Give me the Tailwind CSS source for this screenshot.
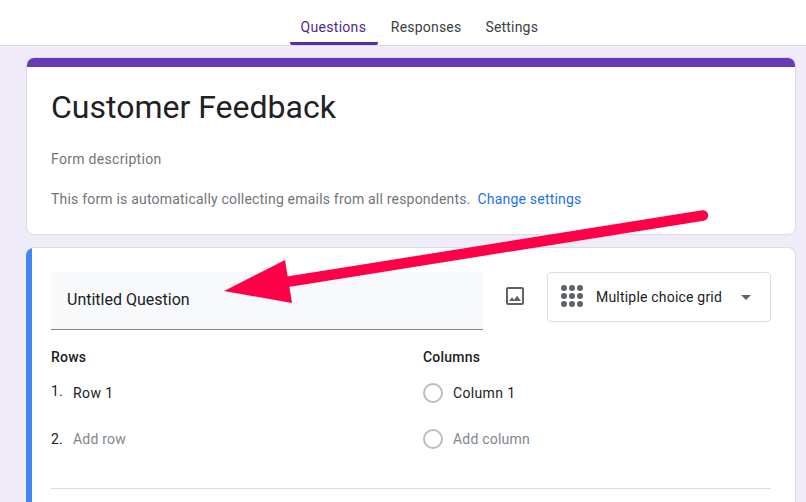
<!DOCTYPE html>
<html lang="en">
<head>
  <meta charset="UTF-8" />
  <title>Customer Feedback</title>
  <script src="https://cdn.jsdelivr.net/npm/@tailwindcss/browser@4"></script>
</head>
<body class="relative w-[806px] h-[502px] overflow-hidden bg-[#f0ebf8] font-['Roboto',sans-serif] text-[#202124]">

  <!-- tabs -->
  <div class="h-[46px] bg-white border-b border-[#dadce0] flex justify-center pl-[22px]">
    <div class="flex text-[14px] font-[450] text-[#3c4043] tracking-[0.2px]">
      <div class="w-[88px] h-[45px] pt-[18px] pr-[1px] leading-[18px] text-center text-[#4a2a8e] tracking-[0.3px] border-b-[3px] border-[#512da8] rounded-b-[2px]">Questions</div>
      <div class="ml-[13px] pt-[18px] leading-[18px]">Responses</div>
      <div class="ml-[24px] pt-[18px] leading-[18px]">Settings</div>
    </div>
  </div>

  <!-- title card -->
  <div class="ml-[26px] mt-[11px] w-[770px] h-[178px] bg-white border border-[#dadce0] rounded-[8px] overflow-hidden">
    <div class="h-[10px] -mx-px -mt-px bg-[#673ab7]"></div>
    <div class="pl-[24px] pt-[20px]">
      <div class="text-[32px] leading-[40px]">Customer Feedback</div>
      <div class="mt-[22px] text-[14px] leading-[20px] tracking-[0.3px] text-[#70757a]">Form description</div>
      <div class="mt-[20px] text-[14px] leading-[20px] tracking-[0.2px] text-[#70757a]">This form is automatically collecting emails from all respondents.<span class="ml-[7px] text-[#1a73e8]">Change settings</span></div>
    </div>
  </div>

  <!-- question card -->
  <div class="ml-[26px] mt-[12px] w-[770px] h-[255px] bg-white border border-[#dadce0] border-l-0 border-b-0 rounded-t-[8px] overflow-hidden relative">
    <div class="absolute left-0 top-0 bottom-0 w-[6px] bg-[#4285f4]"></div>
    <div class="pl-[25px] pr-[24px] pt-[24px]">
      <div class="flex">
        <div class="w-[432px] h-[58px] bg-[#f8f9fa] border-b border-[#80868b] pl-[16px] pt-[18px] text-[16px] leading-[20px]">Untitled Question</div>
        <div class="w-[64px] h-[48px] flex items-center justify-center">
          <svg width="24" height="24" viewBox="0 0 24 24" fill="#5f6368"><path d="M19 5v14H5V5h14m0-2H5c-1.100 0-2 .9-2 2v14c0 1.100.9 2 2 2h14c1.100 0 2-.9 2-2V5c0-1.100-.9-2-2-2z"/><path d="M14.140 11.860l-3 3.870L9 13.140 6 17h12z"/></svg>
        </div>
        <div class="w-[224px] h-[50px] border border-[#dadce0] rounded-[4px] flex items-center pl-[13px]">
          <svg class="-mt-[2px]" width="22" height="22" viewBox="0 0 22 22" fill="#5f6368"><circle cx="3" cy="3" r="3"/><circle cx="11" cy="3" r="3"/><circle cx="19" cy="3" r="3"/><circle cx="3" cy="11" r="3"/><circle cx="11" cy="11" r="3"/><circle cx="19" cy="11" r="3"/><circle cx="3" cy="19" r="3"/><circle cx="11" cy="19" r="3"/><circle cx="19" cy="19" r="3"/></svg>
          <span class="ml-[13px] text-[14px] leading-[20px] tracking-[0.2px]">Multiple choice grid</span>
          <span class="ml-[19px] w-0 h-0 border-x-[5px] border-x-transparent border-t-[5px] border-t-[#5f6368]"></span>
        </div>
      </div>

      <div class="flex mt-[19px] text-[14px] tracking-[0.2px]">
        <div class="w-[372px]">
          <div class="font-medium leading-[16px]">Rows</div>
          <div class="flex mt-[18px] h-[20px] leading-[20px]"><span class="w-[22px] leading-[16px]">1.</span><span class="tracking-[0.4px]">Row 1</span></div>
          <div class="flex mt-[26px] h-[20px] leading-[20px]"><span class="w-[22px]">2.</span><span class="text-[#80868b]">Add row</span></div>
        </div>
        <div>
          <div class="font-medium leading-[16px]">Columns</div>
          <div class="flex items-center mt-[18px] h-[20px]"><span class="w-[20px] h-[20px] rounded-full border-2 border-[#bdbdbd]"></span><span class="ml-[10px] leading-[20px] tracking-[0.35px]">Column 1</span></div>
          <div class="flex items-center mt-[26px] h-[20px]"><span class="w-[20px] h-[20px] rounded-full border-2 border-[#bdbdbd]"></span><span class="ml-[10px] leading-[20px] text-[#80868b]">Add column</span></div>
        </div>
      </div>

      <div class="mt-[39px] w-[720px] border-t border-[#dadce0]"></div>
    </div>
  </div>

  <!-- annotation arrow -->
  <svg class="absolute left-0 top-0" width="806" height="502" viewBox="0 0 806 502">
    <line x1="703" y1="215.500" x2="280" y2="283" stroke="#ff0048" stroke-width="10.500" stroke-linecap="round"/>
    <polygon points="224,291 285,260 292,303" fill="#ff0048"/>
  </svg>
</body>
</html>
